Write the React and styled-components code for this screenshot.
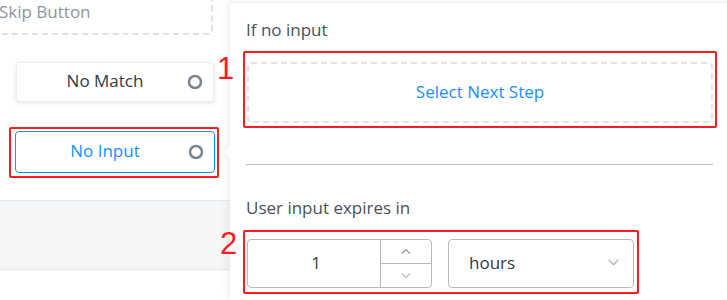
import React from "react";
import styled, { createGlobalStyle } from "styled-components";

const GlobalStyle = createGlobalStyle`
  html, body {
    margin: 0;
    padding: 0;
    background: #fff;
    overflow: hidden;
  }
  body {
    font-family: "Open Sans", "Noto Sans", sans-serif;
    color: #333a44;
  }
`;

const Page = styled.div`
  display: flex;
  width: 727px;
  height: 300px;
  overflow: hidden;
`;

const LeftColumn = styled.div`
  width: 230px;
  flex-shrink: 0;
  display: flex;
  flex-direction: column;
  align-items: flex-start;
`;

const SkipBox = styled.div`
  box-sizing: border-box;
  margin: -11px 0 0 -30px;
  width: 243px;
  height: 46px;
  padding: 0 0 2px 27px;
  display: flex;
  align-items: center;
  border: 2px dashed #dce1e8;
  border-radius: 4px;
  font-size: 17px;
  color: #8c95a3;
`;

const NodeButton = styled.div`
  box-sizing: border-box;
  width: ${(p) => p.$width}px;
  height: ${(p) => p.$height}px;
  margin: ${(p) => p.$margin || "0"};
  display: flex;
  align-items: center;
  padding: 0 20px 3px 0;
  position: relative;
  background: #fff;
  border-radius: 4px;
  border: 1px solid ${(p) => (p.$active ? "#1890ff" : "#eceef2")};
  box-shadow: ${(p) => (p.$active ? "none" : "0 1px 4px rgba(0, 0, 0, 0.12)")};
  color: ${(p) => (p.$active ? "#1890ff" : "#333a44")};
  font-size: 17px;

  span {
    flex: 1;
    text-align: center;
  }

  svg {
    position: absolute;
    right: 10px;
    top: 50%;
    transform: translateY(-50%);
  }
`;

const Highlight = styled.div`
  position: relative;
  box-sizing: border-box;
  border: 2px solid #f81d22;
  border-radius: 2px;
  width: ${(p) => p.$width}px;
  margin: ${(p) => p.$margin || "0"};
  padding: ${(p) => p.$padding};
`;

const Marker = styled.span`
  position: absolute;
  left: ${(p) => p.$left}px;
  top: ${(p) => p.$top}px;
  font-family: "Liberation Sans", Arial, sans-serif;
  font-size: 31px;
  line-height: 1;
  color: #f81d22;
`;

const GreyBand = styled.div`
  align-self: stretch;
  margin-top: 22px;
  height: 68px;
  background: #f5f6f8;
  border-top: 1px solid #e6e9ee;
  border-bottom: 1px solid #e6e9ee;
`;

const Panel = styled.div`
  position: relative;
  flex: 1;
  min-width: 0;
  margin-top: 2px;
  padding: 15px 14px 0 16px;
  background: #fff;
  border-top: 1px solid #eef0f3;
  border-radius: 4px 0 0 0;
  box-shadow: -2px 0 8px rgba(0, 0, 0, 0.08);
`;

const Pointer = styled.div`
  position: absolute;
  left: -6px;
  top: 142px;
  width: 0;
  height: 0;
  border-top: 7px solid transparent;
  border-bottom: 7px solid transparent;
  border-right: 6px solid #fff;
  filter: drop-shadow(-1px 0 1px rgba(0, 0, 0, 0.06));
`;

const Label = styled.div`
  font-size: 17px;
  line-height: 24px;
  color: #4b5058;
  margin-top: ${(p) => p.$top || 0}px;
`;

const DashedTarget = styled.div`
  box-sizing: border-box;
  height: 61px;
  padding-bottom: 2px;
  display: flex;
  align-items: center;
  justify-content: center;
  border: 2px dashed #dfe3ea;
  border-radius: 4px;
  font-size: 17px;
  color: #1890ff;
`;

const Divider = styled.hr`
  margin: 36px 0 0;
  border: none;
  height: 1px;
  background: #b8bfc9;
`;

const InputRow = styled.div`
  display: flex;
  gap: 16px;
`;

const NumberBox = styled.div`
  box-sizing: border-box;
  width: 185px;
  height: 49px;
  display: flex;
  border: 1px solid #b4bac4;
  border-radius: 4px;
`;

const NumberValue = styled.div`
  flex: 1;
  display: flex;
  align-items: center;
  justify-content: center;
  padding: 0 0 2px 4px;
  font-size: 17px;
  color: #333a44;
`;

const Stepper = styled.div`
  width: 50px;
  display: flex;
  flex-direction: column;
  border-left: 1px solid #b4bac4;
`;

const StepButton = styled.div`
  flex: 1;
  display: flex;
  align-items: center;
  justify-content: center;
  border-top: ${(p) => (p.$down ? "1px solid #b4bac4" : "none")};
`;

const SelectBox = styled.div`
  box-sizing: border-box;
  width: 186px;
  height: 49px;
  display: flex;
  align-items: center;
  justify-content: space-between;
  padding: 0 13px 2px 20px;
  border: 1px solid #b4bac4;
  border-radius: 4px;
  font-size: 17px;
  color: #333a44;
`;

const RadioIcon = () => (
  <svg width="16" height="16" viewBox="0 0 16 16">
    <circle cx="8" cy="8" r="6" fill="none" stroke="#7b8591" strokeWidth="2.5" />
  </svg>
);

const Chevron = ({ up, size = 10, color = "#8d939c" }) => (
  <svg width={size} height={size / 2 + 2} viewBox="0 0 10 7">
    <path
      d={up ? "M1 5.5 L5 1.5 L9 5.5" : "M1 1.5 L5 5.5 L9 1.5"}
      fill="none"
      stroke={color}
      strokeWidth="1.1"
    />
  </svg>
);

export default function App() {
  return (
    <>
      <GlobalStyle />
      <Page>
        <LeftColumn>
          <SkipBox>Skip Button</SkipBox>
          <NodeButton $width={198} $height={40} $margin="27px 0 0 16px">
            <span>No Match</span>
            <RadioIcon />
          </NodeButton>
          <Highlight $width={210} $margin="25px 0 0 9px" $padding="2px 2px 3px 4px">
            <NodeButton $active $width={200} $height={42}>
              <span>No Input</span>
              <RadioIcon />
            </NodeButton>
          </Highlight>
          <GreyBand />
        </LeftColumn>

        <Panel>
          <Pointer />
          <Label>If no input</Label>
          <Highlight $width={474} $margin="9px 0 0 -3px" $padding="9px 2px 3px 2px">
            <Marker $left={-28} $top={0}>1</Marker>
            <DashedTarget>Select Next Step</DashedTarget>
          </Highlight>
          <Divider />
          <Label $top={31}>User input expires in</Label>
          <Highlight $width={396} $margin="10px 0 0 -3px" $padding="7px 3px 4px 2px">
            <Marker $left={-25} $top={-4}>2</Marker>
            <InputRow>
              <NumberBox>
                <NumberValue>1</NumberValue>
                <Stepper>
                  <StepButton>
                    <Chevron up />
                  </StepButton>
                  <StepButton $down>
                    <Chevron color="#b3b8c0" />
                  </StepButton>
                </Stepper>
              </NumberBox>
              <SelectBox>
                hours
                <Chevron size={13} color="#aab0ba" />
              </SelectBox>
            </InputRow>
          </Highlight>
        </Panel>
      </Page>
    </>
  );
}
